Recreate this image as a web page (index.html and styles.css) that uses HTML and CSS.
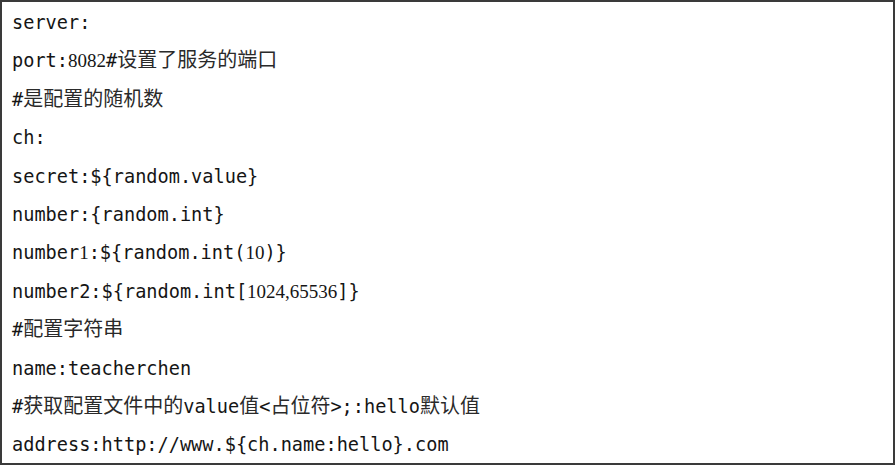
FILE: index.html
```html
<!DOCTYPE html>
<html lang="zh">
<head>
<meta charset="utf-8">
<title>config</title>
<link rel="stylesheet" href="styles.css">
</head>
<body>
<div class="box">
  <div class="line">server:</div>
  <div class="line">port:<span class="d">8082</span>#<span class="zh">设置了服务的端口</span></div>
  <div class="line">#<span class="zh">是配置的随机数</span></div>
  <div class="line">ch:</div>
  <div class="line">secret:${random.value}</div>
  <div class="line">number:{random.int}</div>
  <div class="line">number<span class="d">1</span>:${random.int(<span class="d">10</span>)}</div>
  <div class="line">number2:${random.int[<span class="d">1024,65536</span>]}</div>
  <div class="line">#<span class="zh">配置字符串</span></div>
  <div class="line">name:teacherchen</div>
  <div class="line">#<span class="zh">获取配置文件中的</span>value<span class="zh">值</span>&lt;<span class="zh">占位符</span>&gt;;:hello<span class="zh">默认值</span></div>
  <div class="line">address:http://www.${ch.name:hello}.com</div>
</div>
</body>
</html>
```
FILE: styles.css
```css
html, body {
  margin: 0;
  padding: 0;
  background: #ffffff;
}
.box {
  box-sizing: border-box;
  width: 895px;
  height: 465px;
  border: 2px solid #3a3a3a;
  padding: 2px 0 0 10px;
  overflow: hidden;
  font-family: "DejaVu Sans Mono", "Noto Sans CJK SC", monospace;
  font-size: 18.6px;
  color: #151515;
}
.line {
  height: 38.4px;
  line-height: 38.4px;
  white-space: pre;
}
.d {
  font-family: "Liberation Serif", serif;
  font-size: 19px;
  line-height: 1;
}
.zh {
  font-family: "Noto Sans CJK SC", sans-serif;
  font-size: 20px;
  line-height: 1;
  color: #2a2a2a;
}
```
